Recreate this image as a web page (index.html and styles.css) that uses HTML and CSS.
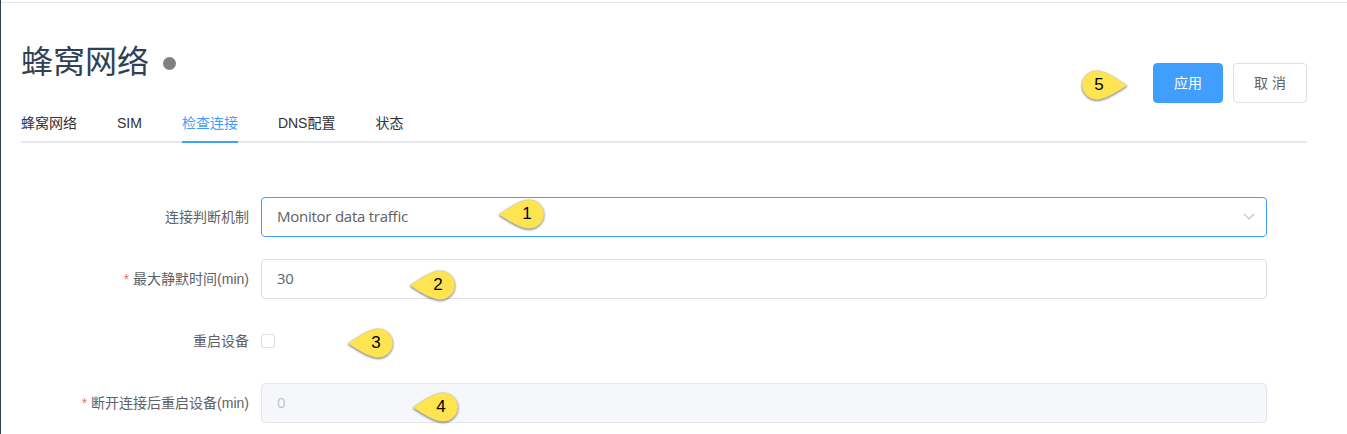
FILE: index.html
```html
<!DOCTYPE html>
<html lang="zh-CN">
<head>
<meta charset="utf-8">
<title>蜂窝网络</title>
<link rel="stylesheet" href="styles.css">
</head>
<body>
<svg width="0" height="0" class="defs">
  <symbol id="pin" viewBox="0 0 52 38"><path d="M2 17.5C13 10 24 2.7 32.3 2.7a14.6 14.4 0 0 1 0 28.8C24 31.5 13 24.5 2 17.5Z"/></symbol>
</svg>
<main class="page">
  <header class="header">
    <h1 class="title">蜂窝网络<span class="status-dot"></span></h1>
    <div class="actions">
      <button class="btn btn-primary">应用</button>
      <button class="btn btn-cancel">取 消</button>
    </div>
  </header>
  <nav class="tabs">
    <a class="tab">蜂窝网络</a>
    <a class="tab">SIM</a>
    <a class="tab active">检查连接</a>
    <a class="tab">DNS配置</a>
    <a class="tab">状态</a>
  </nav>
  <form class="form">
    <div class="row">
      <label class="label">连接判断机制</label>
      <div class="control focused"><span class="value">Monitor data traffic</span>
        <svg class="arrow" width="12" height="8" viewBox="0 0 12 8"><path d="M1 1l5 5 5-5"/></svg>
      </div>
    </div>
    <div class="row">
      <label class="label required">最大静默时间(min)</label>
      <div class="control"><span class="value">30</span></div>
    </div>
    <div class="row">
      <label class="label">重启设备</label>
      <span class="checkbox"></span>
    </div>
    <div class="row">
      <label class="label required">断开连接后重启设备(min)</label>
      <div class="control disabled"><span class="value">0</span></div>
    </div>
  </form>
</main>
<div class="pin pin-1"><svg><use href="#pin"/></svg><b>1</b></div>
<div class="pin pin-2"><svg><use href="#pin"/></svg><b>2</b></div>
<div class="pin pin-3"><svg><use href="#pin"/></svg><b>3</b></div>
<div class="pin pin-4"><svg><use href="#pin"/></svg><b>4</b></div>
<div class="pin pin-5"><svg><use href="#pin"/></svg><b>5</b></div>
</body>
</html>
```
FILE: styles.css
```css
* { box-sizing: border-box; }
body {
  margin: 0;
  height: 434px;
  overflow: hidden;
  background: #fff;
  color: #606266;
  font: 14px/20px "Liberation Sans", "Noto Sans CJK SC", sans-serif;
}
.defs { position: absolute; }
.page {
  height: 434px;
  overflow: hidden;
  border-left: 1px solid #304156;
  padding: 2px 40px 0 20px;
  background: linear-gradient(#e6e6e6, #e6e6e6) 0 2px / 100% 1px no-repeat;
}
.header {
  height: 101px;
  display: flex;
  justify-content: space-between;
}
.title {
  margin: 36px 0 0;
  height: 48px;
  display: flex;
  align-items: center;
  font-size: 32px;
  line-height: 48px;
  font-weight: 400;
  color: #304156;
}
.status-dot {
  width: 13px;
  height: 13px;
  margin: 2px 0 0 14px;
  border-radius: 50%;
  background: #808080;
}
.actions { display: flex; gap: 10px; padding-top: 61px; }
.btn {
  height: 40px;
  padding: 0;
  border: 1px solid #dcdfe6;
  border-radius: 4px;
  background: #fff;
  color: #606266;
  font: inherit;
}
.btn-primary { width: 70px; border-color: #409eff; background: #409eff; color: #fff; }
.btn-cancel { width: 74px; }
.tabs {
  display: flex;
  gap: 40px;
  height: 40px;
  border-bottom: 2px solid #e4e7ed;
  color: #303133;
}
.tab { height: 40px; line-height: 40px; white-space: nowrap; }
.active { color: #409eff; border-bottom: 2px solid #409eff; }
.form {
  display: flex;
  flex-direction: column;
  gap: 22px;
  padding: 54px 40px 0 0;
}
.row { display: flex; align-items: center; height: 40px; }
.label {
  width: 240px;
  padding-right: 12px;
  text-align: right;
  white-space: nowrap;
}
.required::before { content: "*"; color: #f56c6c; margin-right: 4px; }
.control {
  flex: 1;
  height: 40px;
  display: flex;
  align-items: center;
  justify-content: space-between;
  padding: 0 11px 0 15px;
  border: 1px solid #dcdfe6;
  border-radius: 4px;
  background: #fff;
  font: 15px/20px "Open Sans", sans-serif;
  letter-spacing: -.25px;
}
.value { padding-bottom: 2px; }
.focused { border-color: #409eff; }
.disabled { background: #f5f7fa; border-color: #e4e7ed; color: #c0c4cc; }
.arrow { fill: none; stroke: #c0c4cc; stroke-width: 1.2; }
.checkbox {
  width: 14px;
  height: 14px;
  border: 1px solid #dcdfe6;
  border-radius: 2px;
  background: #fff;
}
.pin { position: absolute; width: 52px; height: 38px; }
.pin svg {
  display: block;
  width: 52px;
  height: 38px;
  fill: #ffe452;
  stroke: #d8cf94;
  stroke-width: .5;
  filter: drop-shadow(0 1.5px 1px rgba(0, 0, 0, .55));
}
.pin b {
  position: absolute;
  left: 20px;
  top: 7px;
  width: 20px;
  text-align: center;
  font: 17px/20px "Liberation Sans", sans-serif;
  color: #000;
}
.pin-1 { left: 497px; top: 197px; }
.pin-2 { left: 408px; top: 268px; }
.pin-3 { left: 346px; top: 326px; }
.pin-4 { left: 411px; top: 390px; }
.pin-5 { left: 1077px; top: 68px; }
.pin-5 use { transform: translateX(52px) scaleX(-1); }
.pin-5 b { left: 12px; }
```
